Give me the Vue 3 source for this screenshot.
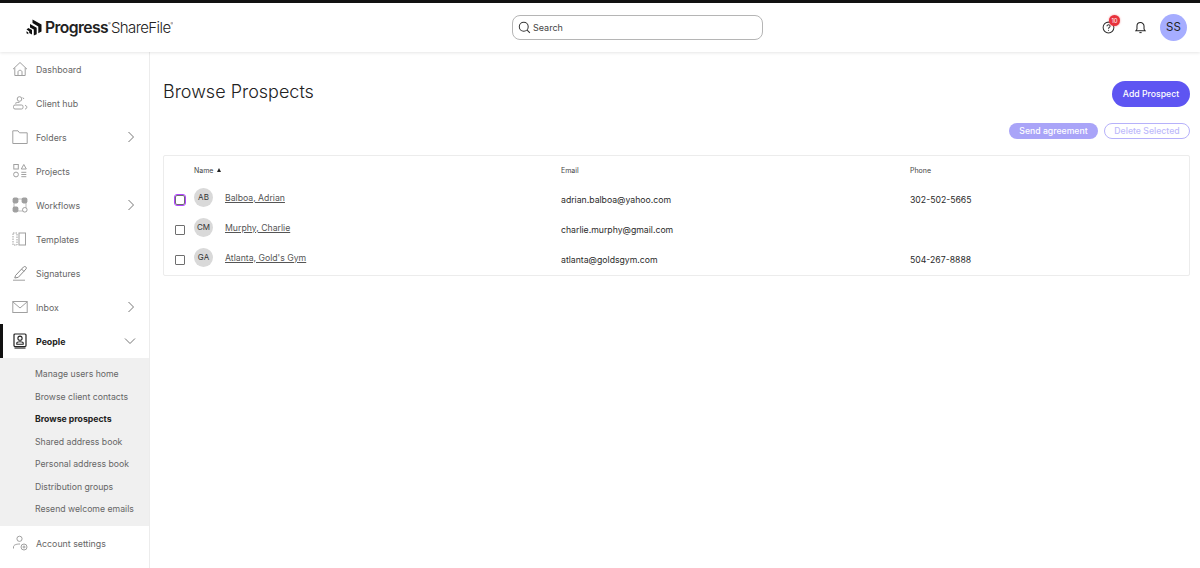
<script setup>
const nav = [
  { label: 'Dashboard', icon: 'home' },
  { label: 'Client hub', icon: 'hub' },
  { label: 'Folders', icon: 'folder', arrow: 'right' },
  { label: 'Projects', icon: 'projects' },
  { label: 'Workflows', icon: 'workflows', arrow: 'right' },
  { label: 'Templates', icon: 'templates' },
  { label: 'Signatures', icon: 'signatures' },
  { label: 'Inbox', icon: 'inbox', arrow: 'right' },
  { label: 'People', icon: 'people', arrow: 'down', active: true }
]
const sub = [
  'Manage users home',
  'Browse client contacts',
  'Browse prospects',
  'Shared address book',
  'Personal address book',
  'Distribution groups',
  'Resend welcome emails'
]
const rows = [
  { initials: 'AB', name: 'Balboa, Adrian', email: 'adrian.balboa@yahoo.com', phone: '302-502-5665', focus: true },
  { initials: 'CM', name: 'Murphy, Charlie', email: 'charlie.murphy@gmail.com', phone: '' },
  { initials: 'GA', name: "Atlanta, Gold's Gym", email: 'atlanta@goldsgym.com', phone: '504-267-8888' }
]
</script>

<template>
  <div class="page">
    <header class="top">
      <div class="logo">
        <svg class="logo-mark" viewBox="0 0 16 17" width="16" height="17">
          <path d="M6.500 .5 15.500 5.600V12.500L12.300 14.300V7.400L6.500 4.100Z" fill="#111" />
          <path d="M4 5 10.700 8.800V15.300L7.800 16.600V10.500L4 8.400Z" fill="#111" />
          <path d="M2.300 8.900 6 11V15.500L3.200 14V12.200L.5 10.600Z" fill="#111" />
          <path d="M.5 12.300 2.300 13.400V15.300L.5 14.300Z" fill="#111" />
        </svg>
        <span class="logo-a">Progress</span><span class="reg">®</span><span class="logo-b">ShareFile</span><span class="reg">®</span>
      </div>
      <div class="search">
        <svg viewBox="0 0 14 14" width="13" height="13" fill="none" stroke="#333" stroke-width="1.1">
          <circle cx="6.200" cy="6.200" r="4.800" /><path d="M9.800 9.800 12.800 12.800" />
        </svg>
        <span>Search</span>
      </div>
      <div class="top-right">
        <div class="help">
          <svg viewBox="0 0 14 14" width="13" height="13" fill="none" stroke="#333" stroke-width="1.1">
            <circle cx="7" cy="7" r="5.800" />
            <path d="M5.400 5.600C5.400 3.600 8.800 3.700 8.700 5.600 8.600 6.900 7 6.900 7 8.300" />
            <circle cx="7" cy="10" r=".6" fill="#333" stroke="none" />
          </svg>
          <span class="badge">10</span>
        </div>
        <svg class="bell" viewBox="0 0 14 14" width="13" height="13" fill="none" stroke="#222" stroke-width="1.1">
          <path d="M2 10.500H12L10.800 8.800V5.500C10.800 3.200 9 1.700 7 1.700S3.200 3.200 3.200 5.500V8.800Z" />
          <path d="M5.800 12.500H8.200" />
        </svg>
        <div class="avatar-top">SS</div>
      </div>
    </header>

    <div class="body">
      <aside class="side">
        <a v-for="item in nav" :key="item.label" class="nav" :class="{ active: item.active }">
          <svg class="nav-icon" viewBox="0 0 16 16" width="16" height="16" fill="none" :stroke="item.active ? '#222' : '#a0a0a0'" stroke-width="1">
            <template v-if="item.icon === 'home'">
              <path d="M1 8.200 8 1.500 15 8.200M2.800 6.800V14.500H13.200V6.800" />
              <path d="M6 14.500V11C6 8.700 10 8.700 10 11V14.500" />
            </template>
            <template v-else-if="item.icon === 'hub'">
              <circle cx="7.500" cy="4" r="2.300" />
              <rect x="1.500" y="10" width="9.500" height="4" rx="1.500" />
              <path d="M3.200 8.300C4.500 7.500 6 7.300 7.500 7.300M10.800 2.500 12 4M13 10.500C14.500 10.500 14.800 11.500 14.800 12.300 14.800 13.300 14 14 13 14" />
            </template>
            <template v-else-if="item.icon === 'folder'">
              <path d="M.8 14.500V1.800H6L7.500 3.800H15.200V14.500Z" stroke-linejoin="round" />
            </template>
            <template v-else-if="item.icon === 'projects'">
              <rect x="1.800" y="1.500" width="4.500" height="4.500" />
              <path d="M11.800 1.500 14.300 6H9.300Z" />
              <circle cx="4" cy="11.500" r="2.400" />
              <path d="M9.300 9.300H14.300M9.300 11.500H14.300M9.300 13.700H14.300" />
            </template>
            <template v-else-if="item.icon === 'workflows'">
              <rect x="2" y="2" width="12" height="12" stroke="#bdbdbd" />
              <rect x=".6" y=".6" width="5.800" height="5.800" rx="1.800" fill="#a0a0a0" stroke="none" />
              <rect x="9.600" y=".6" width="5.800" height="5.800" rx="1.800" fill="#a0a0a0" stroke="none" />
              <rect x=".6" y="9.600" width="5.800" height="5.800" rx="1.800" fill="#a0a0a0" stroke="none" />
              <circle cx="12.800" cy="12.800" r="2.300" fill="#fff" />
            </template>
            <template v-else-if="item.icon === 'templates'">
              <rect x="1" y="2" width="4" height="12" stroke-dasharray="1.500 1" />
              <rect x="7" y="2" width="6.500" height="12" />
            </template>
            <template v-else-if="item.icon === 'signatures'">
              <path d="M3.500 10.500 11.500 2C13 .6 15.300 2.500 14 4L6.300 12.300 2.800 13Z" stroke="#8a8a8a" />
              <path d="M9.500 4 12 6.500" stroke="#8a8a8a" />
              <path d="M1 15.200H13" />
            </template>
            <template v-else-if="item.icon === 'inbox'">
              <rect x=".8" y="2.500" width="14.400" height="11" />
              <path d="M1 3 8 9 15 3" />
            </template>
            <template v-else-if="item.icon === 'people'">
              <rect x="2" y="1" width="12" height="12.500" rx="1" stroke-width="1.200" />
              <path d="M2.500 15H13.500" stroke-width="1.200" />
              <circle cx="8" cy="5.200" r="2.100" stroke-width="1.100" />
              <path d="M4.800 11.200V10C4.800 8.300 11.200 8.300 11.200 10V11.200Z" stroke-width="1.100" />
            </template>
          </svg>
          <span class="nav-label">{{ item.label }}</span>
          <svg v-if="item.arrow === 'right'" class="chev" viewBox="0 0 10 12" width="10" height="12" fill="none" stroke="#777" stroke-width="1">
            <path d="M2.500 1 7.500 6 2.500 11" />
          </svg>
          <svg v-if="item.arrow === 'down'" class="chev" viewBox="0 0 12 10" width="12" height="10" fill="none" stroke="#777" stroke-width="1">
            <path d="M1 2.500 6 7.500 11 2.500" />
          </svg>
        </a>
        <div class="submenu">
          <a v-for="s in sub" :key="s" class="sub" :class="{ on: s === 'Browse prospects' }">{{ s }}</a>
        </div>
        <a class="nav account">
          <svg class="nav-icon" viewBox="0 0 16 16" width="16" height="16" fill="none" stroke="#a0a0a0" stroke-width="1">
            <circle cx="7.500" cy="3.800" r="2.600" />
            <path d="M1.500 13.500V12C1.500 10 4 9 8 9" />
            <circle cx="12" cy="12" r="3" />
            <circle cx="12" cy="12" r="1" />
          </svg>
          <span class="nav-label">Account settings</span>
        </a>
      </aside>

      <main class="main">
        <div class="title-row">
          <h1>Browse Prospects</h1>
          <button class="add">Add Prospect</button>
        </div>
        <div class="actions">
          <button class="send">Send agreement</button>
          <button class="del">Delete Selected</button>
        </div>
        <div class="table">
          <div class="row head">
            <span class="c-check"></span>
            <span class="c-name">Name <i class="sort"></i></span>
            <span class="c-email">Email</span>
            <span class="c-phone">Phone</span>
          </div>
          <div v-for="r in rows" :key="r.email" class="row item">
            <span class="c-check"><i class="box" :class="{ focus: r.focus }"></i></span>
            <span class="c-name name-cell">
              <i class="ini">{{ r.initials }}</i>
              <a class="link">{{ r.name }}</a>
            </span>
            <span class="c-email val">{{ r.email }}</span>
            <span class="c-phone val">{{ r.phone }}</span>
          </div>
        </div>
      </main>
    </div>
  </div>
</template>

<style>
html, body { margin: 0; background: #fff; }
</style>

<style scoped>
.page {
  width: 1200px;
  height: 568px;
  display: flex;
  flex-direction: column;
  overflow: hidden;
  font-family: Inter, "Liberation Sans", sans-serif;
  color: #222;
  background: #fff;
}
.top {
  height: 49px;
  flex: none;
  border-top: 3px solid #111;
  display: grid;
  grid-template-columns: 512px 251px 1fr;
  align-items: center;
  box-shadow: 0 1px 3px rgba(0, 0, 0, .1);
  position: relative;
  z-index: 1;
  background: #fff;
}
.logo { display: flex; align-items: center; padding-left: 26px; }
.logo-mark { margin-right: 3px; }
.logo-a { font-size: 15.700px; font-weight: 600; letter-spacing: -.6px; color: #222; }
.logo-b { font-size: 15px; font-weight: 300; letter-spacing: -.6px; color: #222; }
.reg { font-size: 4px; line-height: 4px; align-self: flex-start; margin-top: 4px; width: 3px; overflow: hidden; color: #444; }
.search {
  height: 25px;
  box-sizing: border-box;
  border: 1px solid #b5b5b5;
  border-radius: 8px;
  display: flex;
  align-items: center;
  gap: 2px;
  padding-left: 5px;
  font-size: 9px;
  color: #444;
}
.top-right { display: flex; align-items: center; justify-content: flex-end; padding-right: 13px; }
.help { position: relative; width: 13px; height: 13px; margin-right: 19px; }
.help svg { display: block; }
.badge {
  position: absolute;
  left: 7px;
  top: -6px;
  width: 11px;
  height: 11px;
  border-radius: 50%;
  background: #e8323c;
  box-shadow: 0 0 2px rgba(232, 50, 60, .6);
  color: #fff;
  font-size: 6px;
  line-height: 11px;
  text-align: center;
}
.bell { margin-right: 13px; }
.avatar-top {
  width: 27px;
  height: 27px;
  border-radius: 50%;
  background: #a6adff;
  color: #222;
  font-size: 11.500px;
  line-height: 27px;
  text-align: center;
}
.body { flex: 1; display: flex; min-height: 0; }
.side {
  width: 150px;
  flex: none;
  box-sizing: border-box;
  border-right: 1px solid #ececec;
  display: flex;
  flex-direction: column;
}
.nav {
  height: 34px;
  flex: none;
  display: flex;
  align-items: center;
  padding-left: 11.500px;
  font-size: 8.800px;
  color: #666;
  position: relative;
}
.nav-icon { flex: none; margin-right: 8.500px; }
.nav-label { flex: 1; }
.chev { flex: none; margin-right: 13px; }
.nav.active { color: #222; font-weight: 700; }
.nav.active::before {
  content: "";
  position: absolute;
  left: 0;
  top: 0;
  bottom: 0;
  width: 3px;
  background: #111;
}
.submenu {
  height: 168px;
  flex: none;
  background: #f0f0f0;
  box-sizing: border-box;
  padding: 5px 0 0 35px;
  display: flex;
  flex-direction: column;
}
.sub { height: 22.500px; line-height: 22.500px; font-size: 8.700px; color: #666; white-space: nowrap; flex: none; }
.sub.on { color: #222; font-weight: 700; }
.main { flex: 1; padding: 0 10px 0 13px; min-width: 0; }
.title-row { display: flex; justify-content: space-between; align-items: flex-start; }
h1 {
  margin: 27px 0 0;
  font-size: 18px;
  line-height: 26px;
  font-weight: 300;
  color: #222;
}
.add {
  margin-top: 29px;
  width: 78px;
  height: 26px;
  border: 0;
  border-radius: 13px;
  background: #5e55f2;
  color: #fff;
  font: 500 8.700px Inter, sans-serif;
  padding: 0;
}
.actions { display: flex; justify-content: flex-end; gap: 6px; margin-top: 16px; }
.send, .del {
  height: 16px;
  border-radius: 8px;
  padding: 0;
  font: 500 8.700px Inter, sans-serif;
  box-sizing: border-box;
}
.send { width: 89px; border: 0; background: #a9a4f8; color: #fff; }
.del { width: 86px; border: 1.500px solid #b6b1fa; background: #fff; color: #bdb9fb; }
.table {
  margin-top: 16px;
  border: 1px solid #ececec;
  border-radius: 2px;
  height: 121px;
  box-sizing: border-box;
}
.row { display: flex; align-items: center; }
.head { height: 28px; font-size: 7px; color: #444; }
.item { height: 30px; }
.c-check { width: 30px; flex: none; display: flex; justify-content: center; padding-left: 2px; box-sizing: border-box; }
.c-name { width: 367px; flex: none; }
.c-email { width: 349px; flex: none; }
.sort {
  display: inline-block;
  width: 0;
  height: 0;
  border: 2.500px solid transparent;
  border-top: 0;
  border-bottom: 4px solid #222;
  margin-left: 2px;
  vertical-align: 1px;
}
.box {
  width: 7.500px;
  height: 7.500px;
  border: 1.500px solid #6e6e6e;
  border-radius: 1px;
  display: block;
  margin-top: 2px;
}
.box.focus { outline: 1.500px solid #b044ff; outline-offset: .5px; border-radius: 2px; }
.name-cell { display: flex; align-items: center; gap: 12px; margin-top: -3px; }
.ini {
  width: 19px;
  height: 19px;
  border-radius: 50%;
  background: #d9d9d9;
  font-style: normal;
  font-size: 8px;
  line-height: 19px;
  text-align: center;
  color: #333;
}
.link { font-size: 8.700px; color: #555; text-decoration: underline; }
.val { font-size: 8.700px; color: #2a2a2a; padding-top: 2px; min-height: 11px; }
</style>
